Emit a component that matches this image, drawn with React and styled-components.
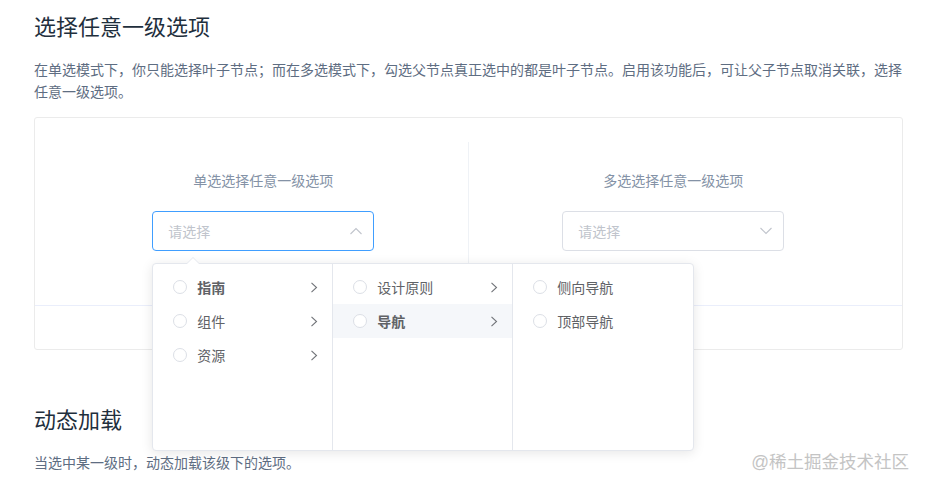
import React from "react";
import styled, { createGlobalStyle } from "styled-components";

const Global = createGlobalStyle`
  html, body { margin: 0; padding: 0; background: #fff; }
  body {
    font-family: "Helvetica Neue", "Liberation Sans", "Noto Sans CJK SC", sans-serif;
    -webkit-font-smoothing: antialiased;
  }
  * { box-sizing: border-box; }
`;

const Page = styled.div`
  position: relative;
  width: 926px;
  height: 489px;
  overflow: hidden;
  padding: 11px 0 0 34px;
`;

const Section = styled.section`
  width: 869px;
  margin-top: ${(p) => p.$mt || 0}px;
`;

const Title = styled.h3`
  margin: 0;
  font-size: 22px;
  font-weight: 400;
  line-height: 33px;
  color: #1f2f3d;
`;

const Desc = styled.p`
  margin: 15px 0 0;
  font-size: 14px;
  line-height: 22px;
  color: #5e6d82;
`;

const DemoBlock = styled.div`
  margin-top: 14px;
  border: 1px solid #ebebeb;
  border-radius: 3px;
`;

const Source = styled.div`
  padding: 24px;
  display: flex;
`;

const Block = styled.div`
  position: relative;
  width: 50%;
  padding: 30px 0;
  text-align: center;
  border-right: ${(p) => (p.$last ? "none" : "1px solid #eff2f6")};
`;

const Demonstration = styled.span`
  display: block;
  font-size: 14px;
  line-height: 19px;
  color: #8492a6;
  margin-bottom: 20px;
`;

const Cascader = styled.div`
  position: relative;
  display: inline-block;
  width: 222px;
  vertical-align: top;
`;

const Input = styled.div`
  height: 40px;
  border: 1px solid ${(p) => (p.$focus ? "#409eff" : "#dcdfe6")};
  border-radius: 4px;
  background: #fff;
  display: flex;
  align-items: center;
  justify-content: space-between;
  padding: 0 10px 0 15px;
  font-size: 14px;
  color: #c0c4cc;
  text-align: left;
`;

const Control = styled.div`
  height: 44px;
  border-top: 1px solid #eaeefb;
`;

const Panel = styled.div`
  position: absolute;
  top: 52px;
  left: 0;
  z-index: 10;
  display: flex;
  background: #fff;
  border: 1px solid #e4e7ed;
  border-radius: 4px;
  box-shadow: 0 2px 12px 0 rgba(0, 0, 0, 0.1);
  text-align: left;
`;

const Arrow = styled.div`
  position: absolute;
  top: -7px;
  left: 34px;
  width: 0;
  height: 0;
  border-left: 6px solid transparent;
  border-right: 6px solid transparent;
  border-bottom: 6px solid #e4e7ed;
  &::after {
    content: "";
    position: absolute;
    left: -6px;
    top: 1px;
    border-left: 6px solid transparent;
    border-right: 6px solid transparent;
    border-bottom: 6px solid #fff;
  }
`;

const Menu = styled.ul`
  list-style: none;
  margin: 0;
  width: 180px;
  height: 186px;
  padding: 6px 0;
  border-right: ${(p) => (p.$last ? "none" : "1px solid #e4e7ed")};
`;

const Node = styled.li`
  position: relative;
  display: flex;
  align-items: center;
  height: 34px;
  padding: 0 30px 0 20px;
  font-size: 14px;
  color: #606266;
  font-weight: ${(p) => (p.$path ? 700 : 400)};
  background: ${(p) => (p.$hover ? "#f5f7fa" : "transparent")};
`;

const Radio = styled.span`
  width: 14px;
  height: 14px;
  border: 1px solid #dcdfe6;
  border-radius: 50%;
  background: #fff;
  flex-shrink: 0;
`;

const Label = styled.span`
  padding: 0 10px;
`;

const Postfix = styled.svg`
  position: absolute;
  right: 14px;
  top: 12px;
`;

const Watermark = styled.div`
  position: absolute;
  right: 17px;
  bottom: 16px;
  font-size: 17.5px;
  line-height: 22px;
  color: #c4c4c4;
  text-shadow: 0 0 1px rgba(255, 255, 255, 0.9);
  z-index: 20;
`;

const Chevron = ({ dir }) => (
  <svg width="14" height="8" viewBox="0 0 14 8">
    <path
      d={dir === "up" ? "M1.5 7 L7 1.5 L12.5 7" : "M1.5 1 L7 6.5 L12.5 1"}
      fill="none"
      stroke="#c0c4cc"
      strokeWidth="1.1"
    />
  </svg>
);

const RightArrow = () => (
  <Postfix width="8" height="11" viewBox="0 0 8 11">
    <path d="M1.5 0.8 L6.5 5.5 L1.5 10.2" fill="none" stroke="#707378" strokeWidth="1.1" />
  </Postfix>
);

const menus = [
  [
    { label: "指南", path: true, more: true },
    { label: "组件", more: true },
    { label: "资源", more: true },
  ],
  [
    { label: "设计原则", more: true },
    { label: "导航", path: true, hover: true, more: true },
  ],
  [{ label: "侧向导航" }, { label: "顶部导航" }],
];

export default function App() {
  return (
    <>
      <Global />
      <Page>
        <Section>
          <Title>选择任意一级选项</Title>
          <Desc>
            在单选模式下，你只能选择叶子节点；而在多选模式下，勾选父节点真正选中的都是叶子节点。启用该功能后，可让父子节点取消关联，选择任意一级选项。
          </Desc>
          <DemoBlock>
            <Source>
              <Block>
                <Demonstration>单选选择任意一级选项</Demonstration>
                <Cascader>
                  <Input $focus>
                    <span>请选择</span>
                    <Chevron dir="up" />
                  </Input>
                  <Panel>
                    <Arrow />
                    {menus.map((m, i) => (
                      <Menu key={i} $last={i === menus.length - 1}>
                        {m.map((n) => (
                          <Node key={n.label} $path={n.path} $hover={n.hover}>
                            <Radio />
                            <Label>{n.label}</Label>
                            {n.more && <RightArrow />}
                          </Node>
                        ))}
                      </Menu>
                    ))}
                  </Panel>
                </Cascader>
              </Block>
              <Block $last>
                <Demonstration>多选选择任意一级选项</Demonstration>
                <Cascader>
                  <Input>
                    <span>请选择</span>
                    <Chevron dir="down" />
                  </Input>
                </Cascader>
              </Block>
            </Source>
            <Control />
          </DemoBlock>
        </Section>
        <Section $mt={54}>
          <Title>动态加载</Title>
          <Desc>当选中某一级时，动态加载该级下的选项。</Desc>
        </Section>
        <Watermark>@稀土掘金技术社区</Watermark>
      </Page>
    </>
  );
}
